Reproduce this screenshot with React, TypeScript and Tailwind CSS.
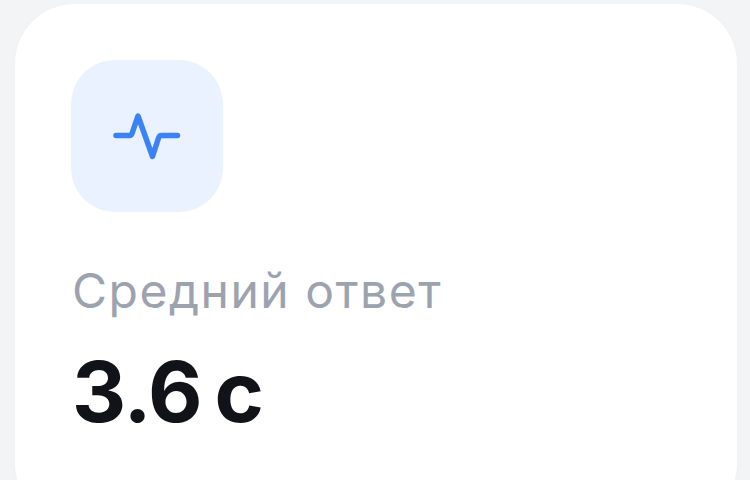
export default function App() {
  return (
    <div className="h-[480px] w-[750px] overflow-hidden bg-[#f3f4f6] pt-[4px] pl-[15px] pr-[13px] font-['Inter',sans-serif]">
      <div className="h-[520px] rounded-[60px] bg-white pt-[56px] pl-[56px] shadow-[0_2px_8px_rgba(0,0,0,0.02)]">
        <div className="flex h-[152px] w-[152px] items-center justify-center rounded-[44px] bg-[#eaf2ff]">
          <svg width="72" height="52" viewBox="0 0 72 52" fill="none" stroke="#3b82f6" strokeWidth="5.5" strokeLinecap="round" strokeLinejoin="round">
            <path d="M5 25.500H18.500C19.500 25.500 20.500 25 21 23.500L27 6L41.500 46.500L47.500 28C48 26.500 49 25.500 50.500 25.500H66.500" />
          </svg>
        </div>
        <div className="mt-[45px] ml-[1px] text-[48px] leading-[68px] tracking-[1.5px] text-[#9ca3af]">Средний ответ</div>
        <div className="mt-[19px] ml-[1px] text-[84px] leading-[96px] font-[750] tracking-[-1px] [word-spacing:-6px] text-[#111318]">3.6 с</div>
      </div>
    </div>
  );
}
